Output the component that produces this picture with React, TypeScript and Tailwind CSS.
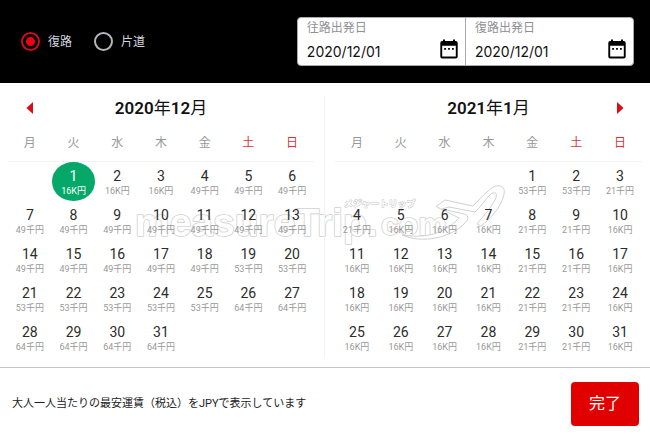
import React, { useState } from 'react'

type Month = {
    title: [string, string][]
    offset: number
    prices: string[]
}

const weekDays = ['月', '火', '水', '木', '金', '土', '日']

const fill = (price: string, count: number) => Array<string>(count).fill(price)

const december: Month = {
    title: [['2020', '年'], ['12', '月']],
    offset: 1,
    prices: [...fill('16K円', 3), ...fill('49千円', 15), ...fill('53千円', 7), ...fill('64千円', 6)],
}

const january: Month = {
    title: [['2021', '年'], ['1', '月']],
    offset: 4,
    prices: [
        '53千円', '53千円', '21千円',
        '21千円', '16K円', '16K円', '16K円', '21千円', '21千円', '16K円',
        ...fill('16K円', 4), '21千円', '21千円', '16K円',
        ...fill('16K円', 4), '21千円', '21千円', '16K円',
        ...fill('16K円', 4), '21千円', '21千円', '16K円',
    ],
}

const CalendarIcon = () => (
    <svg width="18" height="20" viewBox="0 0 18 20" aria-hidden="true">
        <path
            fillRule="evenodd"
            d="M3 0.5h2V2h8V0.5h2V2h0.8A1.9 1.9 0 0 1 17.7 3.9V17.5A1.9 1.9 0 0 1 15.8 19.4H2.2A1.9 1.9 0 0 1 0.3 17.5V3.9A1.9 1.9 0 0 1 2.2 2H3zM2.2 6.8V17.5H15.8V6.8z"
        />
        <path d="M4.2 9h1.8v1.8h-1.8zM8.1 9h1.8v1.8H8.1zM12 9h1.8v1.8h-1.8z" />
    </svg>
)

const TripOption = ({ label, checked, onChange }: { label: string; checked: boolean; onChange: () => void }) => (
    <label className="flex items-center gap-2 text-xs text-gray-300">
        <input
            type="radio"
            name="trip"
            checked={checked}
            onChange={onChange}
            className="size-[19px] appearance-none rounded-full border-2 border-[#b5b5b8] checked:border-[#c8101a] checked:bg-[radial-gradient(circle,#f00010_0_4px,transparent_5px)]"
        />
        {label}
    </label>
)

const DateField = ({ id, label }: { id: string; label: string }) => (
    <div className="flex min-w-0 flex-1 items-end pr-[7px] pl-[9px]">
        <div className="min-w-0 flex-1">
            <label htmlFor={id} className="block text-xs leading-5 text-[#909094]">{label}</label>
            <input
                id={id}
                type="text"
                defaultValue="2020/12/01"
                className="block h-[27px] w-full font-['Inter',sans-serif] text-sm text-[#111] outline-none"
            />
        </div>
        <button type="button" aria-label={label} className="pb-[6px]">
            <CalendarIcon />
        </button>
    </div>
)

const MonthTable = ({ month, selected }: { month: Month; selected?: number }) => {
    const cells = [...Array<number>(month.offset).fill(0), ...month.prices.map((_, i) => i + 1)]
    while (cells.length % 7) cells.push(0)
    const weeks = Array.from({ length: cells.length / 7 }, (_, i) => cells.slice(i * 7, i * 7 + 7))

    return (
        <table className="w-full table-fixed text-center">
            <thead>
                <tr className="border-b border-[#f2f2f2]">
                    {weekDays.map((d, i) => (
                        <th key={d} className={`h-[35px] p-0 text-xs font-normal ${i > 4 ? 'text-[#e0303a]' : 'text-[#999]'}`}>
                            {d}
                        </th>
                    ))}
                </tr>
            </thead>
            <tbody>
                {weeks.map((week, w) => (
                    <tr key={w}>
                        {week.map((day, i) => (
                            <td key={i} className="h-[39px] p-0">
                                {day > 0 && (
                                    <button
                                        type="button"
                                        className={`flex h-[39px] w-full flex-col items-center justify-center rounded-[50%] pt-[3px] ${day === selected ? 'bg-[#05a869] text-white' : 'text-[#2c2c2c]'}`}
                                    >
                                        <span className="text-sm leading-4">{day}</span>
                                        <span className={`text-[9px] leading-[14px] ${day === selected ? 'text-white' : 'text-[#999]'}`}>
                                            {month.prices[day - 1]}
                                        </span>
                                    </button>
                                )}
                            </td>
                        ))}
                    </tr>
                ))}
            </tbody>
        </table>
    )
}

const MonthTitle = ({ month }: { month: Month }) => (
    <h2 className="text-[17px] leading-6 text-[#111]">
        {month.title.map(([num, unit]) => (
            <React.Fragment key={unit}>
                <span className="font-semibold">{num}</span>{unit}
            </React.Fragment>
        ))}
    </h2>
)

// white lettering with a grey edge, so only the outer contour shows
const Watermark = () => (
    <svg
        className="pointer-events-none absolute top-[95px] left-1/2 -translate-x-1/2"
        width="390"
        height="70"
        viewBox="0 0 390 70"
        fill="#fff"
        strokeLinejoin="round"
    >
        <g className="font-['Liberation_Sans',sans-serif] font-bold [paint-order:stroke]" stroke="#d0d0d0" strokeWidth="1.6">
            <text x="5" y="58" className="text-[39px]">measureTrip.</text>
            <text x="251" y="57" className="text-[32px]">com</text>
        </g>
        <text x="214" y="29" stroke="#c4c4c4" strokeWidth="1" className="font-['Noto_Sans_CJK_JP',sans-serif] text-[9px] font-bold [paint-order:stroke]">
            メジャートリップ
        </text>
        <path
            stroke="#d0d0d0"
            strokeWidth="1"
            d="M306 28.5L315 22 343 28C349 22 352 18 357 14 361 10 366 7 370 8 375 9 375 14 373 20 369 31 361 40 351 48L347 46C352 39 360 32 365 22 368 16 366 13 361 16 355 21 351 29 345 34L319 29 312 31 334 36C338 37 339 40 336 44 322 60 292 66 272 57 292 60 311 58 327 42L329 40Z"
        />
    </svg>
)

export default function App() {
    const [roundTrip, setRoundTrip] = useState(true)

    return (
        <main className="bg-white font-['Roboto','Noto_Sans_CJK_JP',sans-serif]">
            <header className="flex items-center justify-between bg-black py-[17px] pr-4 pl-[21px]">
                <div className="flex gap-[22px]">
                    <TripOption label="復路" checked={roundTrip} onChange={() => setRoundTrip(true)} />
                    <TripOption label="片道" checked={!roundTrip} onChange={() => setRoundTrip(false)} />
                </div>
                <div className="flex w-[55%] divide-x divide-[#aaaaae] rounded border border-[#aaaaae] bg-white">
                    <DateField id="outbound" label="往路出発日" />
                    <DateField id="inbound" label="復路出発日" />
                </div>
            </header>

            <section className="relative grid grid-cols-2 pt-[13px] pb-[10px]">
                <Watermark />
                <div className="relative border-r border-[#f2f2f2] pr-[10px] pl-2">
                    <div className="mb-[6px] flex items-center">
                        <button type="button" aria-label="前の月" className="flex w-11 justify-center">
                            <svg width="8" height="12" viewBox="0 0 8 12" fill="#d80d18"><path d="M7 0v12L0.5 6z" /></svg>
                        </button>
                        <div className="flex-1 text-center"><MonthTitle month={december} /></div>
                        <div className="w-11" />
                    </div>
                    <MonthTable month={december} selected={1} />
                </div>
                <div className="relative pr-2 pl-[10px]">
                    <div className="mb-[6px] flex items-center">
                        <div className="w-11" />
                        <div className="flex-1 text-center"><MonthTitle month={january} /></div>
                        <button type="button" aria-label="次の月" className="flex w-11 justify-center">
                            <svg width="8" height="12" viewBox="0 0 8 12" fill="#d80d18"><path d="M1 0v12L7.5 6z" /></svg>
                        </button>
                    </div>
                    <MonthTable month={january} />
                </div>
            </section>

            <footer className="flex items-center justify-between border-t border-[#c3c6ce] py-[14px] pr-[11px] pl-3">
                <p className="pt-0.5 text-[11px] text-[#222]">大人一人当たりの最安運賃（税込）をJPYで表示しています</p>
                <button type="button" className="rounded bg-[#e10000] px-[18px] py-[10px] text-base text-white">完了</button>
            </footer>
        </main>
    )
}
